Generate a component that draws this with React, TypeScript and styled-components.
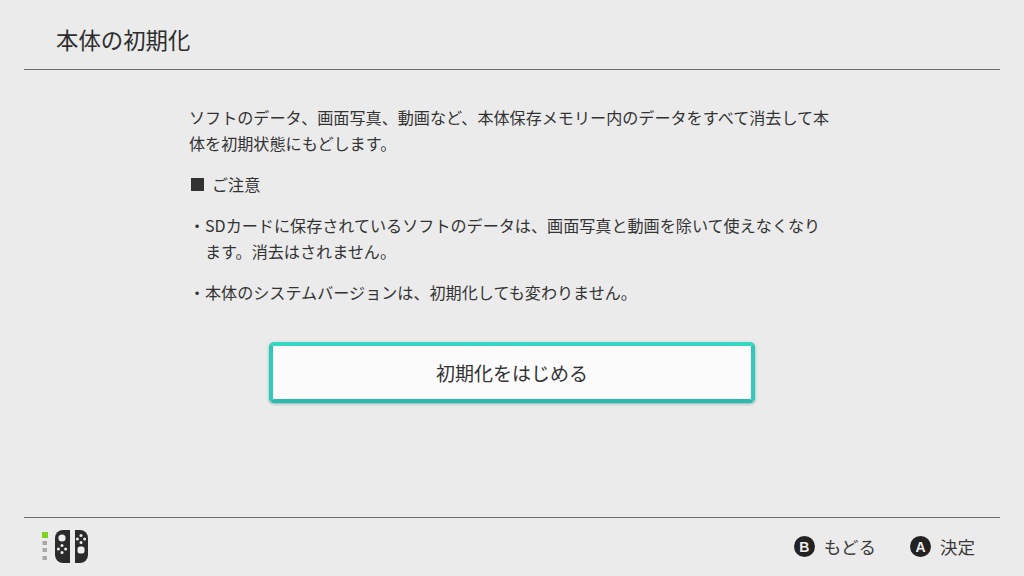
import React from 'react';
import styled, { createGlobalStyle } from 'styled-components';

const GlobalStyle = createGlobalStyle`
    html, body {
        margin: 0;
        padding: 0;
        background: #ebebeb;
    }
    * {
        box-sizing: border-box;
    }
`;

const Screen = styled.div`
    width: 1024px;
    height: 576px;
    display: flex;
    flex-direction: column;
    background: #ebebeb;
    color: #2d2d2d;
    font-family: 'Noto Sans CJK JP', 'Noto Sans', sans-serif;
    overflow: hidden;
`;

const Header = styled.header`
    height: 70px;
    margin: 0 24px;
    padding: 23px 0 0 32px;
    border-bottom: 1px solid #6e6e6e;
`;

const Title = styled.h1`
    margin: 0;
    font-size: 22.4px;
    line-height: 32px;
    font-weight: 400;
`;

const Main = styled.main`
    flex: 1;
    display: flex;
    flex-direction: column;
    padding: 34px 0 0 189px;
`;

const Text = styled.p`
    width: 650px;
    margin: 0 0 15px;
    font-size: 16.1px;
    line-height: 26px;
    color: #333;
`;

const Note = styled(Text)`
    display: flex;
    align-items: center;
    gap: 8px;
`;

const Square = styled.span`
    width: 13px;
    height: 13px;
    background: #333;
    margin-left: 2px;
`;

const Bullet = styled(Text)`
    position: relative;
    padding: 0 12px 0 16px;

    &::before {
        content: '・';
        position: absolute;
        left: 0;
        top: 0;
        width: 16px;
    }
`;

const ButtonRow = styled.div`
    width: 646px;
    display: flex;
    justify-content: center;
    margin-top: 22px;
`;

const StartButton = styled.button`
    width: 486px;
    height: 61px;
    border: 4px solid #30c9bb;
    border-top-color: #38d6c4;
    border-bottom-color: #2cb9ae;
    border-radius: 5px;
    background: #fbfbfb;
    box-shadow: 0 1px 3px rgba(0, 110, 100, 0.45);
    color: #333;
    font-family: inherit;
    font-size: 19px;
`;

const Footer = styled.footer`
    height: 59px;
    margin: 0 24px;
    padding: 0 25px 1px 17px;
    border-top: 1px solid #6e6e6e;
    display: flex;
    align-items: center;
    justify-content: space-between;
`;

const Controller = styled.svg`
    width: 50px;
    height: 38px;
    display: block;
`;

const Actions = styled.div`
    display: flex;
    align-items: center;
    gap: 34px;
`;

const Action = styled.div`
    display: flex;
    align-items: center;
    gap: 9px;
    font-size: 17.5px;
    color: #3a3a3a;
`;

const Badge = styled.span`
    width: 21px;
    height: 21px;
    border-radius: 50%;
    background: #222;
    color: #eee;
    font-family: 'Liberation Sans', sans-serif;
    font-size: 14px;
    font-weight: 700;
    display: flex;
    align-items: center;
    justify-content: center;
`;

const Cluster = ({ cx, cy }: { cx: number; cy: number }) => (
    <g fill="#eee">
        <circle cx={cx} cy={cy - 3.6} r="1.5" />
        <circle cx={cx} cy={cy + 3.6} r="1.5" />
        <circle cx={cx - 3.6} cy={cy} r="1.5" />
        <circle cx={cx + 3.6} cy={cy} r="1.5" />
    </g>
);

const ControllerIcon = () => (
    <Controller viewBox="0 0 50 38">
        <rect x="1" y="4" width="6" height="6" fill="#7ed321" />
        <rect x="1.5" y="13" width="4.5" height="4" fill="#a8a8a8" />
        <rect x="1.5" y="20" width="4.5" height="4" fill="#a8a8a8" />
        <rect x="1.5" y="28" width="4.5" height="4" fill="#a8a8a8" />
        <path d="M29 2h-7a8 8 0 0 0-8 8v17a8 8 0 0 0 8 8h7z" fill="#2b2b2b" />
        <path d="M34 2h5a8 8 0 0 1 8 8v17a8 8 0 0 1-8 8h-5z" fill="#2b2b2b" />
        <circle cx="21" cy="10" r="3.6" fill="#eee" />
        <Cluster cx={21} cy={21} />
        <Cluster cx={40} cy={11} />
        <rect x="36.5" y="18.5" width="7" height="7" rx="2.5" fill="#eee" />
    </Controller>
);

const App = () => {
    return (
        <Screen>
            <GlobalStyle />
            <Header>
                <Title>本体の初期化</Title>
            </Header>
            <Main>
                <Text>
                    ソフトのデータ、画面写真、動画など、本体保存メモリー内のデータをすべて消去して本体を初期状態にもどします。
                </Text>
                <Note>
                    <Square />
                    ご注意
                </Note>
                <Bullet>
                    SDカードに保存されているソフトのデータは、画面写真と動画を除いて使えなくなります。消去はされません。
                </Bullet>
                <Bullet>本体のシステムバージョンは、初期化しても変わりません。</Bullet>
                <ButtonRow>
                    <StartButton>初期化をはじめる</StartButton>
                </ButtonRow>
            </Main>
            <Footer>
                <ControllerIcon />
                <Actions>
                    <Action>
                        <Badge>B</Badge>
                        もどる
                    </Action>
                    <Action>
                        <Badge>A</Badge>
                        決定
                    </Action>
                </Actions>
            </Footer>
        </Screen>
    );
};

export default App;
